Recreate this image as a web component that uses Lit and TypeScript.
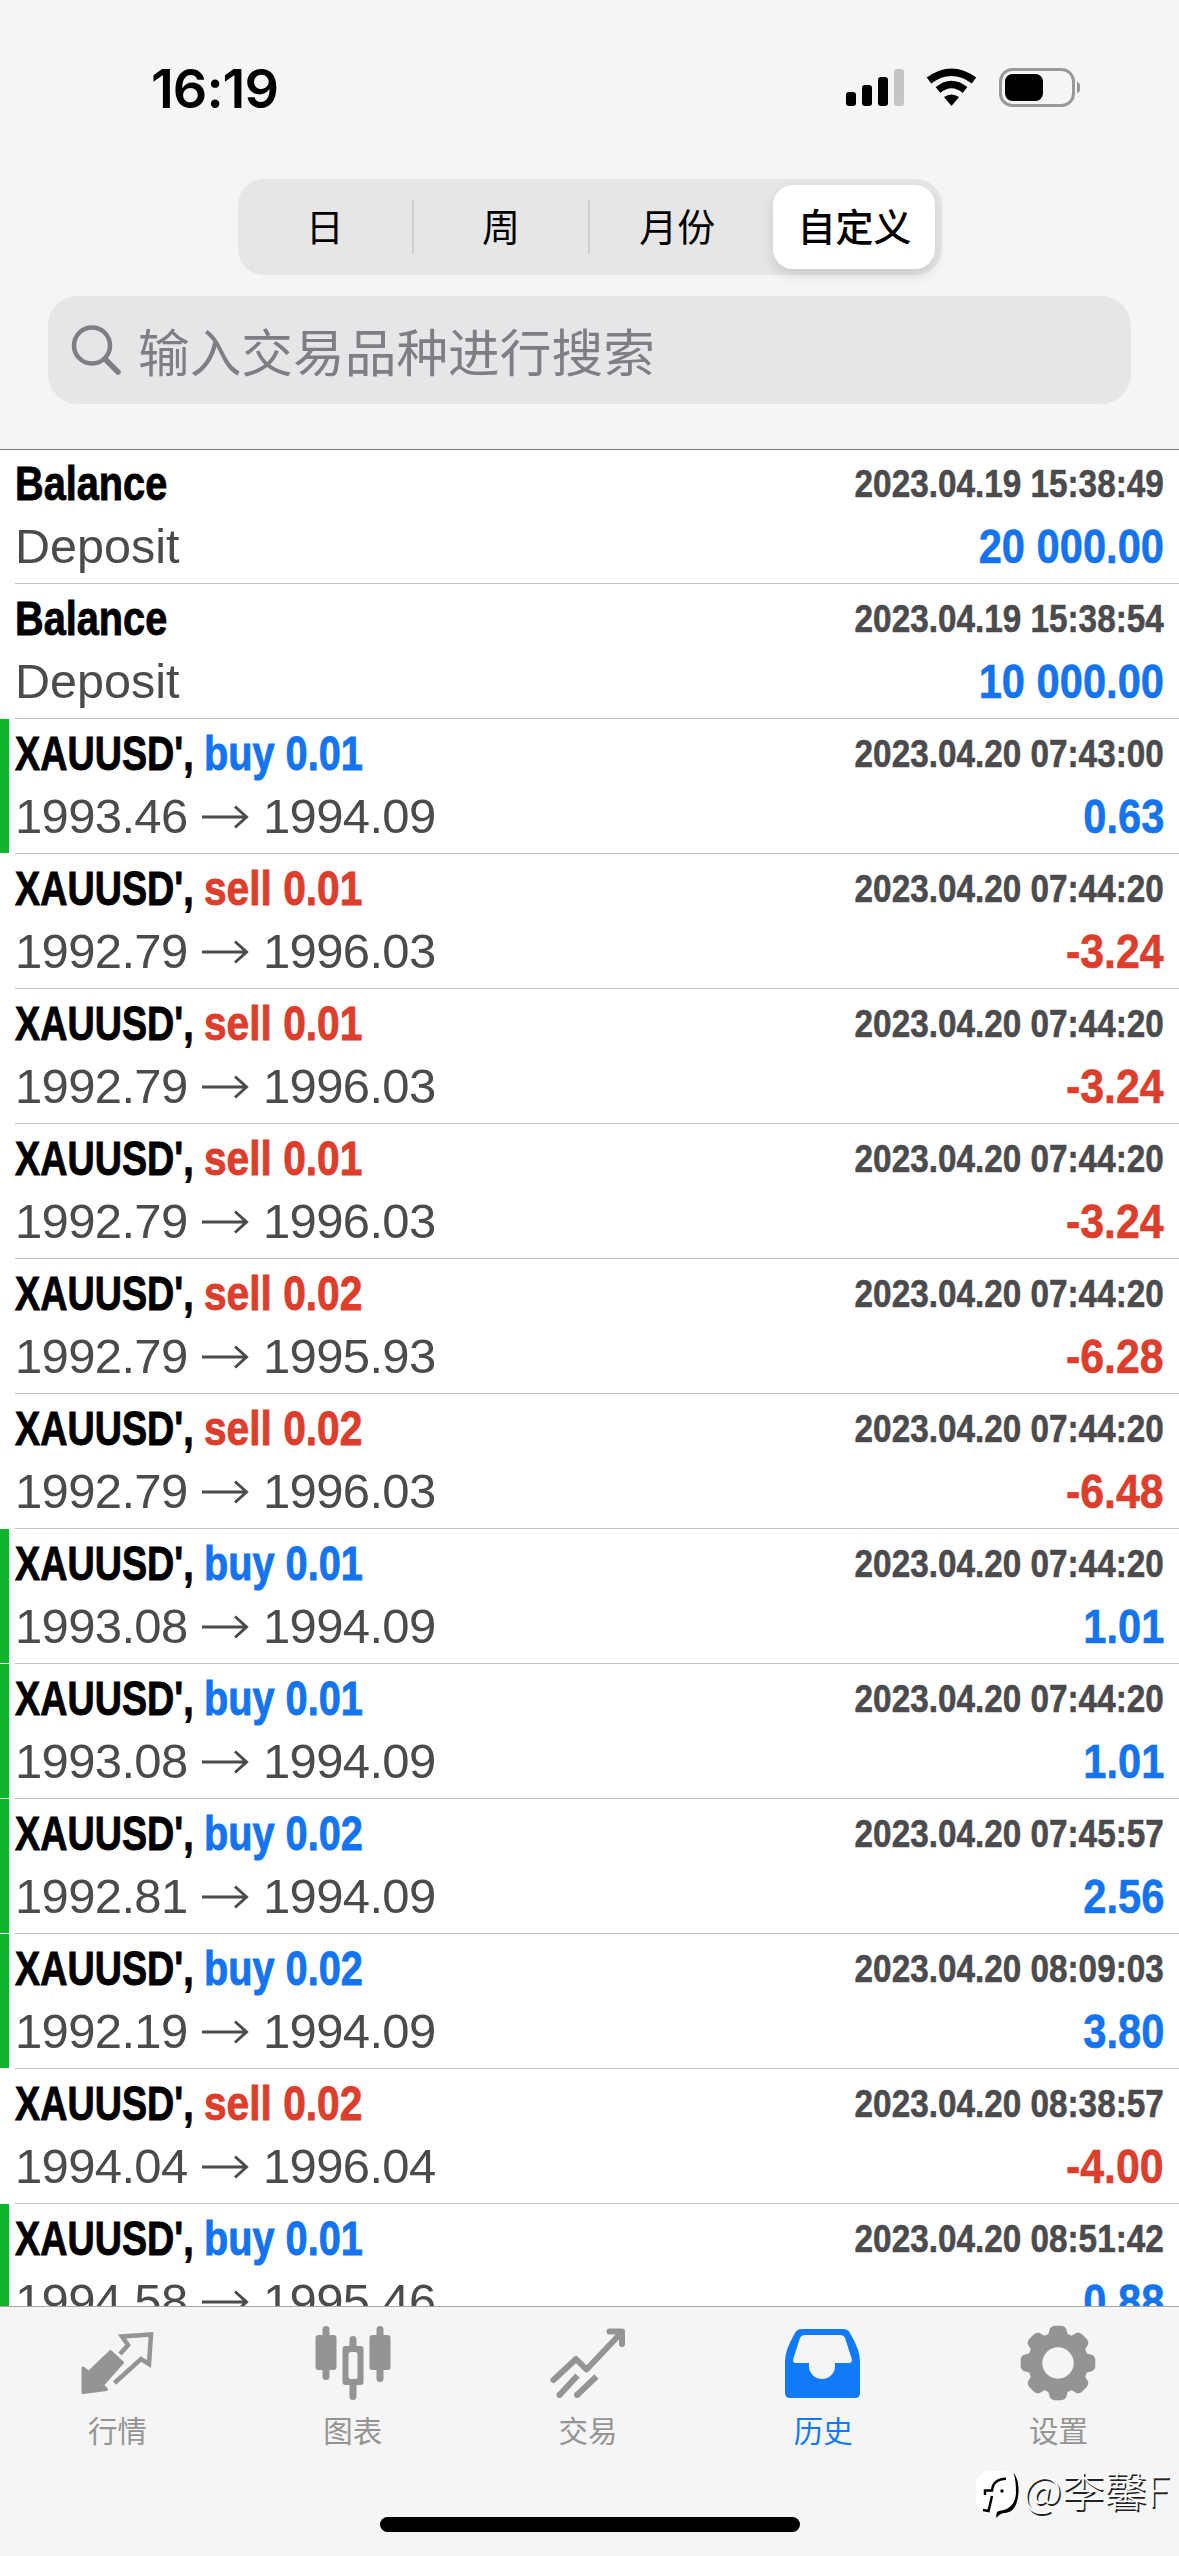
import { LitElement, html, svg, css } from "lit";
import { customElement } from "lit/decorators.js";

type Kind = "balance" | "buy" | "sell";
interface Deal { kind: Kind; lots?: string; open?: string; close?: string; time: string; profit: string; }

const deal = (kind: Kind, lots: string, open: string, close: string, time: string, profit: string): Deal =>
  ({ kind, lots, open, close, time, profit });

const DEALS: Deal[] = [
  { kind: "balance", time: "2023.04.19 15:38:49", profit: "20 000.00" },
  { kind: "balance", time: "2023.04.19 15:38:54", profit: "10 000.00" },
  deal("buy", "0.01", "1993.46", "1994.09", "2023.04.20 07:43:00", "0.63"),
  deal("sell", "0.01", "1992.79", "1996.03", "2023.04.20 07:44:20", "-3.24"),
  deal("sell", "0.01", "1992.79", "1996.03", "2023.04.20 07:44:20", "-3.24"),
  deal("sell", "0.01", "1992.79", "1996.03", "2023.04.20 07:44:20", "-3.24"),
  deal("sell", "0.02", "1992.79", "1995.93", "2023.04.20 07:44:20", "-6.28"),
  deal("sell", "0.02", "1992.79", "1996.03", "2023.04.20 07:44:20", "-6.48"),
  deal("buy", "0.01", "1993.08", "1994.09", "2023.04.20 07:44:20", "1.01"),
  deal("buy", "0.01", "1993.08", "1994.09", "2023.04.20 07:44:20", "1.01"),
  deal("buy", "0.02", "1992.81", "1994.09", "2023.04.20 07:45:57", "2.56"),
  deal("buy", "0.02", "1992.19", "1994.09", "2023.04.20 08:09:03", "3.80"),
  deal("sell", "0.02", "1994.04", "1996.04", "2023.04.20 08:38:57", "-4.00"),
  deal("buy", "0.01", "1994.58", "1995.46", "2023.04.20 08:51:42", "0.88"),
];

// Eight rounded teeth around a circular hole.
const gearPath = (() => {
  let d = "";
  for (let i = 0; i < 8; i++) {
    const a = (i * Math.PI) / 4;
    const p = (r: number, o: number) => `${(38 + r * Math.sin(a + o)).toFixed(2)} ${(38 - r * Math.cos(a + o)).toFixed(2)}`;
    d += `${i ? "L" : "M"}${p(30.5, -0.32)}L${p(35.5, -0.23)}Q${p(37.5, -0.18)} ${p(37.5, -0.1)}L${p(37.5, 0.1)}Q${p(37.5, 0.18)} ${p(35.5, 0.23)}L${p(30.5, 0.32)}`;
  }
  return d + "ZM38 22.3a15.700 15.700 0 1 0 0 31.400a15.700 15.700 0 1 0 0-31.400Z";
})();

const TABS = [
  { label: "行情", icon: svg`<path fill="currentColor" stroke="currentColor" stroke-width="3" stroke-linejoin="round" d="M3 43L8.500 47.500L30.500 26.500L42.500 37.500L22.500 60L26.500 64.500L3 67.500Z"/><path fill="none" stroke="currentColor" stroke-width="4.500" d="M40 29L48 20L42 11.500L71 9.500L69 39L61 34L34.500 58"/>` },
  { label: "图表", icon: svg`<g fill="currentColor"><rect x="0.500" y="10" width="21" height="35" rx="3"/><rect x="7.500" y="1" width="7" height="54" rx="3.500"/><rect x="54.500" y="10" width="21" height="35" rx="3"/><rect x="61.500" y="1" width="7" height="56" rx="3.500"/><rect x="34.500" y="11" width="7" height="16" rx="3.500"/><rect x="34.500" y="54" width="7" height="21" rx="3.500"/><path fill-rule="evenodd" d="M30.500 21h15q3 0 3 3v33q0 3-3 3h-15q-3 0-3-3v-33q0-3 3-3ZM36 27q-2.500 0-2.500 2.500v22q0 2.500 2.500 2.500h4q2.500 0 2.500-2.500v-22q0-2.500-2.500-2.500Z"/></g>` },
  { label: "交易", icon: svg`<g fill="none" stroke="currentColor" stroke-width="6" stroke-linejoin="round"><path stroke-linecap="round" d="M3.500 55L26 34L36.500 44.500L71 8M59.500 6.500H72V19"/><path d="M27.500 50.500L9.500 70M46.500 51.500L27 70"/></g><g fill="currentColor"><circle cx="9.500" cy="70" r="3"/><circle cx="27" cy="70" r="3"/></g>` },
  { label: "历史", icon: svg`<path fill="currentColor" fill-rule="evenodd" d="M17 4H58Q63 4 65 8Q75 25 75 36V68Q75 73 70 73H5Q0 73 0 68V36Q0 25 10 8Q12 4 17 4ZM20 10Q16.500 10 15 13L8.500 33Q7 38 11 38H24V41A13 13 0 0 0 50 41V38H64Q68 38 66.500 33L60 13Q58.500 10 55 10Z"/>` },
  { label: "设置", icon: svg`<path fill="currentColor" fill-rule="evenodd" d=${gearPath}/>` },
];

@customElement("status-bar")
class StatusBar extends LitElement {
  static styles = css`
    :host { display: flex; justify-content: space-between; height: 179px; box-sizing: border-box; padding: 61px 99px 0 151px; }
    .time { font: 600 54px/56px Inter, sans-serif; letter-spacing: -1px; }
    .icons { display: block; margin-top: 5px; }
  `;
  render() {
    return html`<div class="time">16:19</div>
      <svg class="icons" width="240" height="44" viewBox="0 0 240 44">
        <rect x="6" y="26" width="10" height="14" rx="3"/><rect x="22" y="19" width="10" height="21" rx="3"/>
        <rect x="38" y="11" width="10" height="29" rx="3"/><rect x="54" y="3" width="10" height="37" rx="3" fill="#c5c5c5"/>
        <g fill="none" stroke="#000" stroke-width="7.500"><path d="M89 14.500Q111.500-2 134 14.500"/><path d="M98 24Q111.500 13 125 24"/></g>
        <path d="M104 31Q111.500 26 119 31L111.500 40Z"/>
        <rect x="160.500" y="3.500" width="73" height="36" rx="12" fill="none" stroke="#999" stroke-width="3"/>
        <rect x="165" y="8" width="38" height="27" rx="7.500"/><path d="M237 15.500Q241 18 241 21.500Q241 25 237 27.500Z" fill="#999"/>
      </svg>`;
  }
}

@customElement("period-picker")
class PeriodPicker extends LitElement {
  static styles = css`
    :host { display: flex; align-items: center; width: 704px; height: 96px; margin: 0 auto; box-sizing: border-box; padding: 6px 6px 6px 0; border-radius: 26px; background: #e6e6e7; font: 38px/80px "Noto Sans CJK SC", sans-serif; }
    .item { flex: 1; height: 84px; text-align: center; font-weight: 400; }
    .rule { width: 2px; height: 54px; background: #cfcfd1; }
    .active { flex: none; width: 162px; border-radius: 20px; background: #fff; margin-left: 9px; font-weight: 500; box-shadow: 0 6px 14px rgba(0,0,0,.12); }
  `;
  render() {
    return html`<span class="item">日</span><i class="rule"></i><span class="item">周</span><i class="rule"></i><span class="item">月份</span><span class="item active">自定义</span>`;
  }
}

@customElement("search-field")
class SearchField extends LitElement {
  static styles = css`
    :host { display: flex; align-items: center; gap: 15px; margin: 21px 48px 0; height: 108px; box-sizing: border-box; padding-left: 23px; border-radius: 30px; background: #e6e6e8; color: #7f7f83; font: 51.700px/1 "Noto Sans CJK SC", sans-serif; }
    .icon { display: block; }
  `;
  render() {
    return html`<svg class="icon" width="52" height="52" viewBox="0 0 52 52" fill="none" stroke="currentColor" stroke-width="4.500" stroke-linecap="round"><circle cx="21" cy="21.500" r="18"/><path stroke-width="5.500" d="M34.500 35.500L47 48"/></svg><span>输入交易品种进行搜索</span>`;
  }
}

@customElement("deal-row")
class DealRow extends LitElement {
  static properties = { deal: { attribute: false } };
  declare deal: Deal;
  static styles = css`
    :host { display: flex; height: 135px; background: #fff; font: 49px/63px "Liberation Sans", Arial, sans-serif; white-space: nowrap; }
    .mark { width: 9px; height: 134px; }
    .mark.long { background: #0eb42c; }
    .body { flex: 1; display: grid; grid-template-columns: 1fr 1fr; grid-template-rows: 63px 63px; margin-left: 6px; padding: 3px 15px 0 0; border-bottom: 1px solid #c3c3c5; height: 131px; }
    .title { display: flex; font-weight: 700; color: #000; -webkit-text-stroke: .9px currentColor; }
    .fit { display: inline-block; transform-origin: 0 50%; }
    .name { width: 189px; }
    .symbol { transform: scaleX(.77); }
    .balance { transform: scaleX(.81); }
    .side { transform: scaleX(.81); }
    .side.sell { transform: scaleX(.83); }
    .blue, .buy { color: #1474ef; }
    .red, .sell { color: #dc3d2c; }
    .prices { display: flex; align-items: center; color: #4b4b4e; }
    .price { width: 177px; letter-spacing: -.65px; }
    .deposit { transform: scaleX(.99); }
    .time, .profit { justify-self: end; transform-origin: 100% 50%; font-weight: 700; -webkit-text-stroke: .6px currentColor; }
    .time { font-size: 39.500px; color: #4b4b4e; transform: scaleX(.843); }
    .profit { transform: scaleX(.85); }
    .profit.red { transform: scaleX(.875); }
  `;
  render() {
    const d = this.deal;
    const cash = d.kind === "balance";
    return html`<div class="mark ${d.kind === "buy" ? "long" : ""}"></div>
      <div class="body">
        <div class="title">${cash
          ? html`<span class="fit balance">Balance</span>`
          : html`<span class="name"><span class="fit symbol">XAUUSD',</span></span><span class="fit side ${d.kind}">${d.kind} ${d.lots}</span>`}</div>
        <span class="time">${d.time}</span>
        <div class="prices">${cash
          ? html`<span class="fit deposit">Deposit</span>`
          : html`<span class="price">${d.open}</span><svg width="71" height="30" viewBox="0 0 71 30" fill="none" stroke="currentColor" stroke-width="3"><path d="M10 15H54M43 4.500L54.500 15L43 25.500"/></svg><span class="price">${d.close}</span>`}</div>
        <span class="profit ${d.profit.startsWith("-") ? "red" : "blue"}">${d.profit}</span>
      </div>`;
  }
}

@customElement("tab-bar")
class TabBar extends LitElement {
  static styles = css`
    :host { display: block; position: relative; height: 250px; box-sizing: border-box; border-top: 1px solid #a5a5a7; background: #f5f5f5; }
    .tabs { display: grid; grid-template-columns: repeat(5, 1fr); padding: 18px 3px 0 0; }
    .tab { display: flex; flex-direction: column; align-items: center; gap: 10px; color: #949494; font: 400 29.500px/36px "Noto Sans CJK SC", sans-serif; }
    .tab.active { color: #117af9; }
    .home { position: absolute; left: 380px; bottom: 24px; width: 420px; height: 15px; border-radius: 8px; background: #000; }
    .badge { position: absolute; left: 975px; top: 157px; display: flex; align-items: center; gap: 3px; color: #fafafa; font: 300 42.500px/50px "Noto Sans CJK SC", sans-serif; text-shadow: 1.500px 1.500px 0 #222; white-space: nowrap; }
    .logo { position: relative; top: 5px; }
  `;
  render() {
    return html`<div class="tabs">${TABS.map((t, i) => html`<div class="tab ${i === 3 ? "active" : ""}"><svg width="76" height="76" viewBox="0 0 76 76">${t.icon}</svg><span>${t.label}</span></div>`)}</div>
      <div class="home"></div>
      <div class="badge"><svg class="logo" width="45" height="50" viewBox="0 0 45 50"><rect x="1" y="2" width="41" height="43" rx="13" fill="#fff"/><path d="M10 26V21.500H17Q18 10 31 9.700M17 27L13.500 42L8 41" fill="none" stroke="#000" stroke-width="2.500"/><path d="M38.500 4Q44 10 43.500 24Q42 43 30 44Q25 44 21.500 49Q20.500 43 24 42Q40 40 41 24Q41 11 38.500 4Z"/><circle cx="27" cy="22" r="1.700"/></svg><span>@李馨F</span></div>`;
  }
}

@customElement("app-root")
class AppRoot extends LitElement {
  static styles = css`
    :host { display: flex; flex-direction: column; width: 1179px; height: 2556px; overflow: hidden; background: #f5f5f5; }
    .head { flex: none; height: 449px; background: #f5f5f5; }
    .list { flex: 1; min-height: 0; overflow: hidden; }
    .edge { height: 1px; background: #7c7c80; margin-bottom: -1px; position: relative; z-index: 1; }
    .foot { flex: none; }
  `;
  render() {
    return html`<header class="head"><status-bar></status-bar><period-picker></period-picker><search-field></search-field></header>
      <main class="list"><div class="edge"></div>${DEALS.map((d) => html`<deal-row .deal=${d}></deal-row>`)}</main>
      <tab-bar class="foot"></tab-bar>`;
  }
}
